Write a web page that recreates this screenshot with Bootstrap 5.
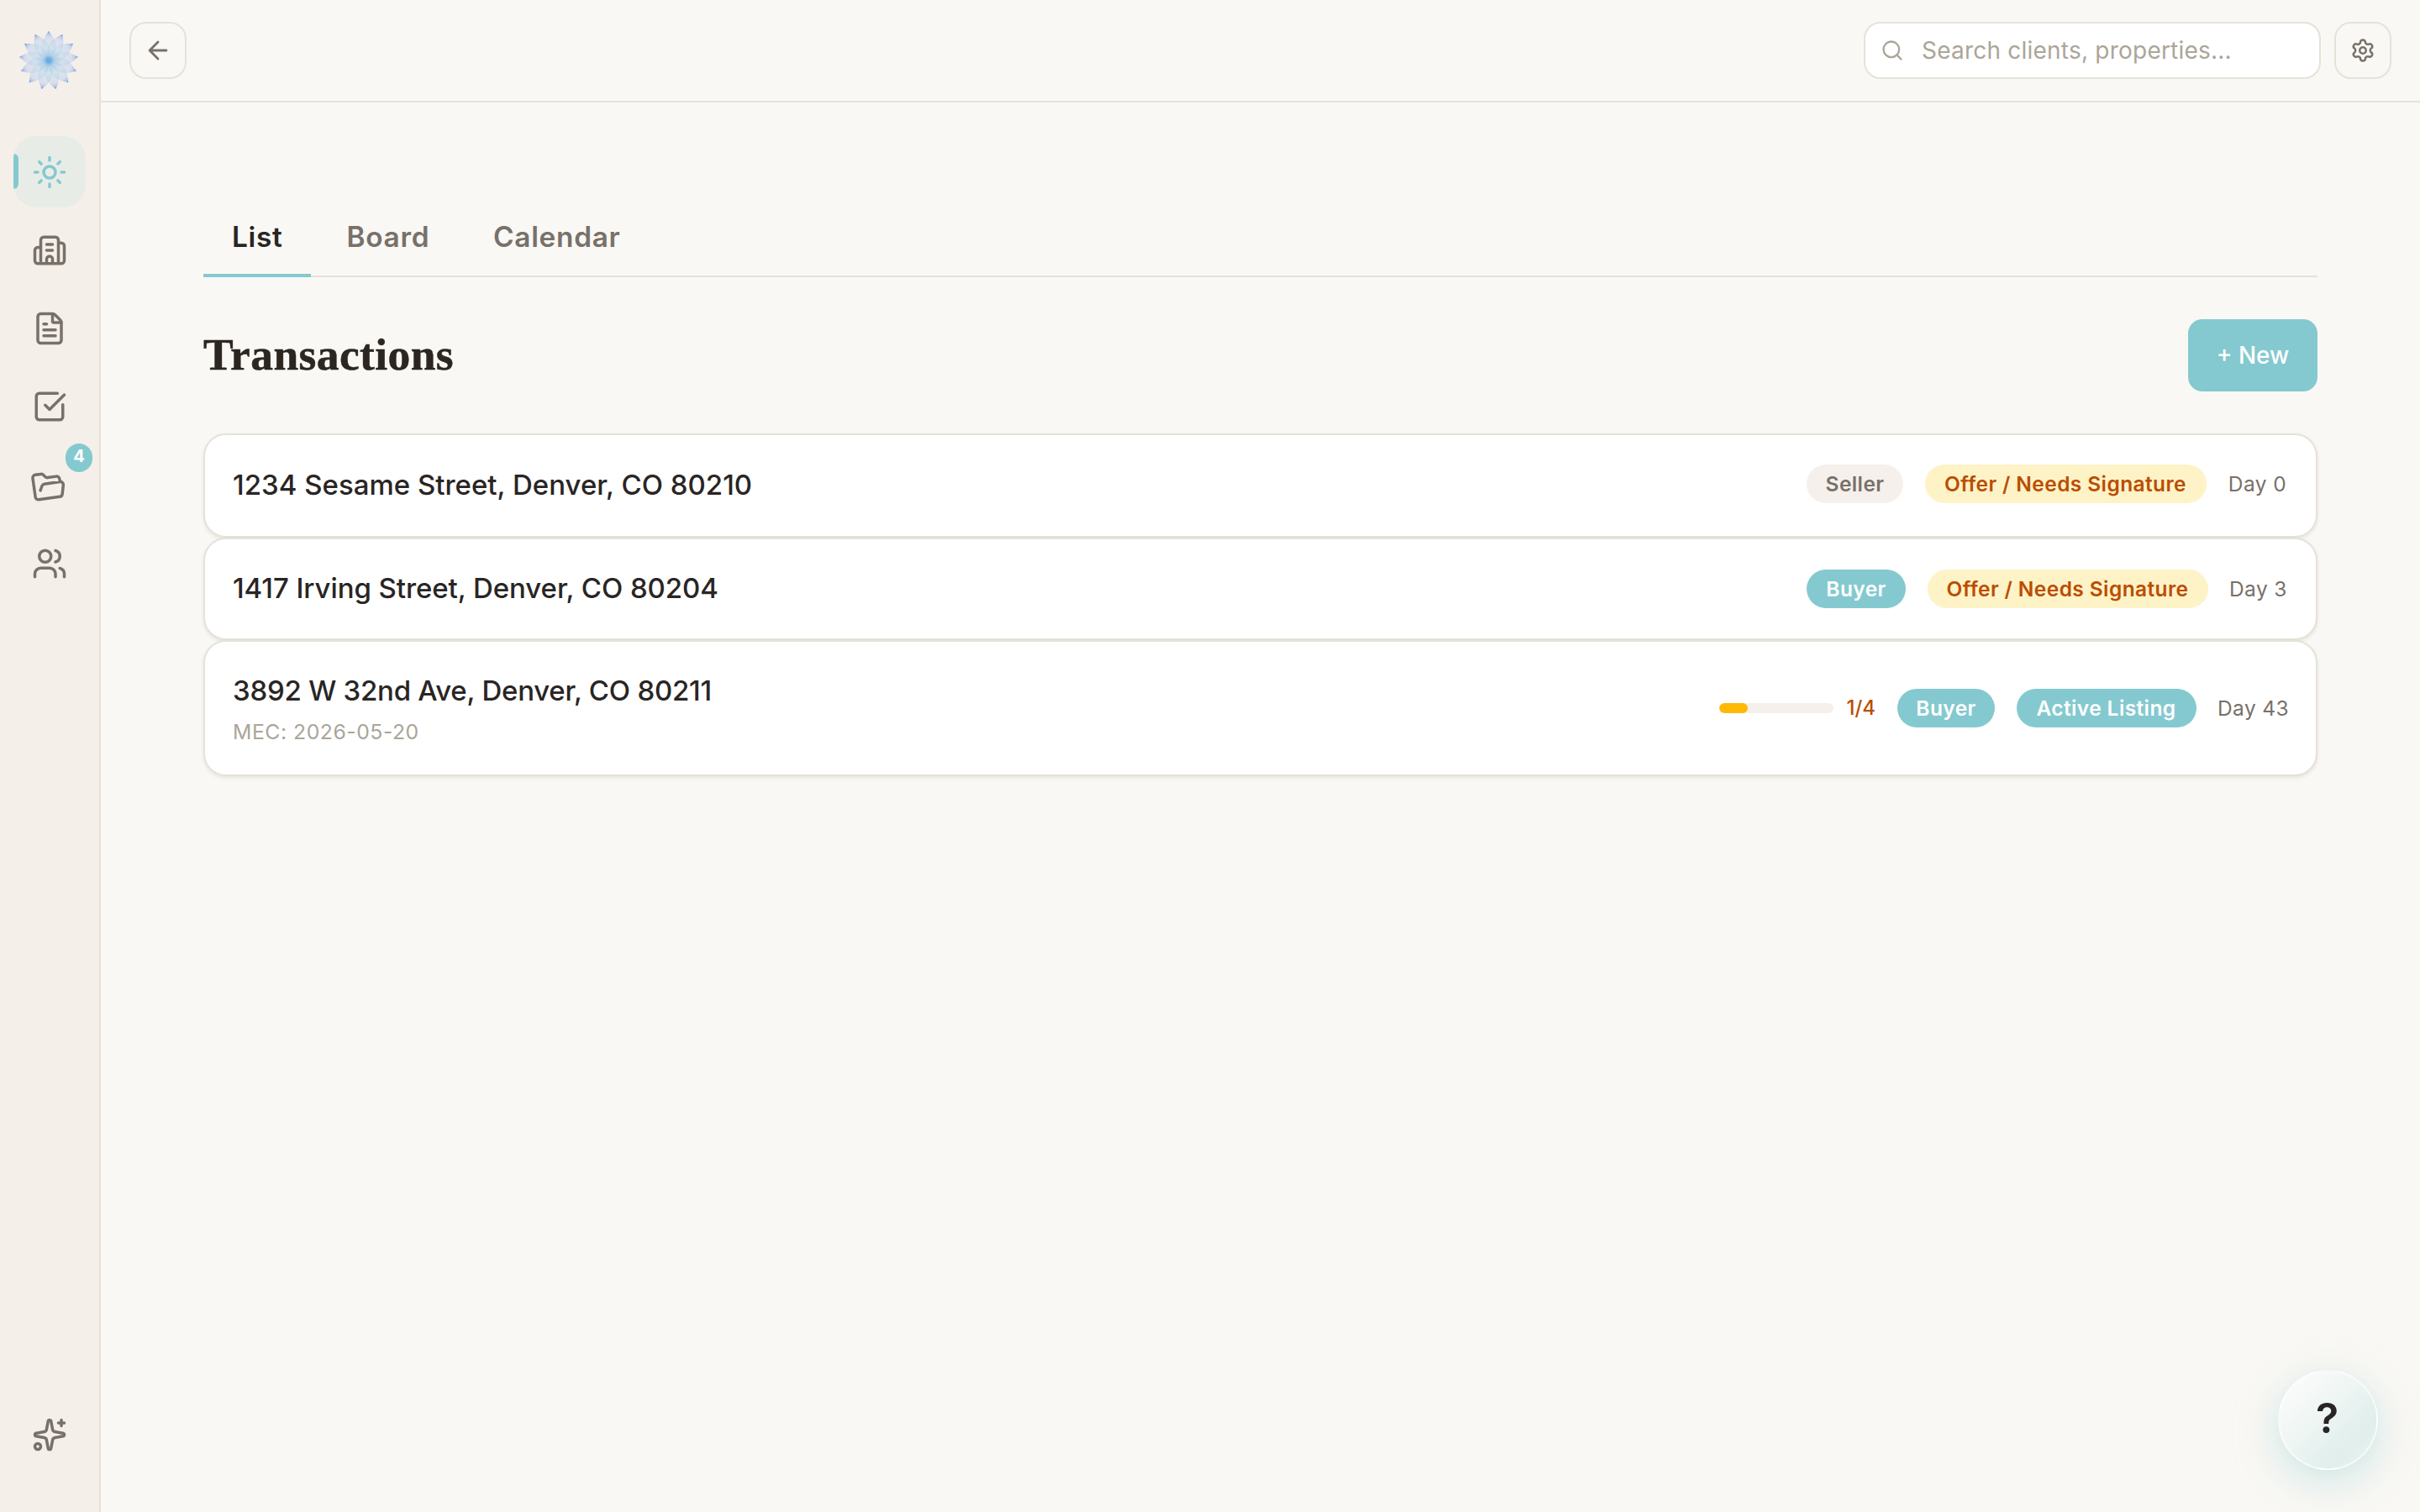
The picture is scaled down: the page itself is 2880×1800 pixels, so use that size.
<!DOCTYPE html>
<html lang="en">
<head>
<meta charset="utf-8">
<meta name="viewport" content="width=device-width, initial-scale=1">
<title>Transactions</title>
<link href="https://cdn.jsdelivr.net/npm/bootstrap@5.3.0/dist/css/bootstrap.min.css" rel="stylesheet">
<style>
:root{--teal:#84c9d0;--line:#e5e2d9;--ink:#292524;--muted-ink:#78716a;--faint:#aba599}
body{font-family:Inter,"Open Sans",sans-serif;background:#faf8f4;color:var(--ink);font-size:34px;line-height:1.5;overflow:hidden}
svg{display:block}
.ico{width:42px;height:42px;fill:none;stroke:currentColor;stroke-width:2;stroke-linecap:round;stroke-linejoin:round}
.rail{width:120px;background:#f5efe9;border-right:2px solid var(--line);padding:34px 16px 50px}
.logo{width:84px;height:76px;margin-bottom:52px}
.rail-nav{gap:8.3px}
.rail-item{width:85.5px;height:85px;border-radius:27px;color:var(--muted-ink);padding:0;border:0}
.rail-item.active{background:#e8ece6;color:var(--teal);overflow:hidden}
.rail-item.active::before{content:"";position:absolute;left:0;top:21px;width:6px;height:42px;background:var(--teal);border-radius:0 6px 6px 0}
.tilt{transform:translate(-1px,1px) rotate(-8deg)}
.count{position:absolute;left:62px;top:-7px;width:32px;height:34px;border-radius:17px;background:var(--teal);color:#fff;font-size:20px;font-weight:700;line-height:31px;text-align:center}
.topbar{height:122px;border-bottom:2px solid var(--line);padding:0 34px}
.sq{width:68px;height:68px;border:2px solid var(--line);border-radius:20px;color:var(--muted-ink);padding:0}
.search{width:544px;height:68px;border:2px solid var(--line);border-radius:20px;background:#fff;color:var(--faint);padding:0 18px;font-size:28px;gap:21px;letter-spacing:.22px}
.content-area{padding:117px 122px 0}
.tabs{border-bottom:2px solid var(--line);gap:8.5px}
.tab{height:91px;padding:18px 33px 18px 34px;margin-bottom:-2px;font-size:33.4px;font-weight:600;line-height:51px;letter-spacing:.7px;color:var(--muted-ink);border:0;border-bottom:4px solid transparent;border-radius:0;text-align:left;white-space:nowrap}
.tab.active{color:var(--ink);border-bottom-color:var(--teal)}
.head{height:86px;margin:50px 0}
.title{font-family:"Liberation Serif",serif;font-weight:700;font-size:53.500px;line-height:84px;padding-bottom:2px;letter-spacing:.4px;color:#2c2621;-webkit-text-stroke:.5px #2c2621}
.btn-new{width:154px;height:86px;border-radius:17px;background:var(--teal);color:#fff;font-size:28px;font-weight:500;padding:0}
.deal{background:#fff;border:2px solid var(--line);border-radius:27px;padding:0 34px 0 33px;box-shadow:0 2px 4px rgba(60,50,30,.1)}
.addr{font-size:33px;font-weight:500;line-height:50px;padding-bottom:2px;white-space:nowrap}
.a2{letter-spacing:-.08px}
.a3{letter-spacing:-.25px}
.mec{font-size:24.8px;line-height:38px;letter-spacing:.5px;padding-top:3px;color:var(--faint)}
.right{gap:25.5px;font-size:24.5px;white-space:nowrap}
.pill{height:46px;line-height:46px;border-radius:23px;text-align:center;font-size:24.5px;font-weight:600;letter-spacing:.4px}
.p-teal{background:var(--teal);color:#fff}
.p-sand{background:#f5f0eb;color:var(--muted-ink)}
.p-gold{background:#fef3c7;color:#bb4d00}
.day{color:var(--muted-ink);text-align:right;letter-spacing:.4px;margin-right:1px}
.meter{width:136px;height:12px;border-radius:6px;background:#f5f0eb;overflow:hidden}
.meter-fill{height:12px;border-radius:6px;background:#ffb900}
.done-count{color:#bb4d00;font-weight:500;font-size:24px;width:35px}
.help{position:fixed;right:50.500px;bottom:50px;width:119px;height:119px;border-radius:50%;border:2px solid rgba(255,255,255,.6);background:linear-gradient(135deg,#fbfcfa 8%,#eef5f3 45%,#e0eeec 75%,#ebf4f2 100%);box-shadow:0 14px 54px rgba(131,201,208,.36),0 4px 14px rgba(131,201,208,.08);font-size:50px;font-weight:600;color:#292524;padding:0 1px 5px 0}
</style>
</head>
<body>
<div class="d-flex vh-100">
  <aside class="rail d-flex flex-column flex-shrink-0">
    <div class="logo">
      <svg width="84" height="76" viewBox="-42 -38 84 76">
        <defs>
          <radialGradient id="pg" gradientUnits="userSpaceOnUse" cx="0" cy="0" r="35">
            <stop offset="0" stop-color="#2f8fe0" stop-opacity=".5"/>
            <stop offset=".2" stop-color="#6fb0ea" stop-opacity=".2"/>
            <stop offset=".45" stop-color="#a9d0ee" stop-opacity=".26"/>
            <stop offset=".8" stop-color="#bccbf0" stop-opacity=".5"/>
            <stop offset=".92" stop-color="#8fb0ea" stop-opacity=".7"/>
            <stop offset="1" stop-color="#3674d8" stop-opacity=".95"/>
          </radialGradient>
          <path id="petal" d="M0 0C-5 -5 -8.500 -12 -8 -18C-7.500 -24 -3.500 -30 0 -35C3.500 -30 7.500 -24 8 -18C8.500 -12 5 -5 0 0Z" fill="url(#pg)" stroke="#8fc4dc" stroke-opacity=".25" stroke-width=".6"/>
        </defs>
        <use href="#petal"/><use href="#petal" transform="rotate(27.69)"/><use href="#petal" transform="rotate(55.38)"/><use href="#petal" transform="rotate(83.08)"/><use href="#petal" transform="rotate(110.77)"/><use href="#petal" transform="rotate(138.46)"/><use href="#petal" transform="rotate(166.15)"/><use href="#petal" transform="rotate(193.85)"/><use href="#petal" transform="rotate(221.54)"/><use href="#petal" transform="rotate(249.23)"/><use href="#petal" transform="rotate(276.92)"/><use href="#petal" transform="rotate(304.62)"/><use href="#petal" transform="rotate(332.31)"/>
      </svg>
    </div>
    <nav class="rail-nav d-flex flex-column">
      <a class="rail-item active position-relative d-flex align-items-center justify-content-center"><svg class="ico" viewBox="0 0 24 24"><circle cx="12" cy="12" r="4"/><path d="M12 2v2M12 20v2M4.930 4.930l1.410 1.410M17.660 17.660l1.410 1.410M2 12h2M20 12h2M6.340 17.660l-1.410 1.410M19.070 4.930l-1.410 1.410"/></svg></a>
      <a class="rail-item d-flex align-items-center justify-content-center"><svg class="ico" viewBox="0 0 24 24"><path d="M10 12h4M10 8h4M14 21v-3a2 2 0 0 0-4 0v3M6 10H4a2 2 0 0 0-2 2v7a2 2 0 0 0 2 2h16a2 2 0 0 0 2-2V9a2 2 0 0 0-2-2h-2M6 21V5a2 2 0 0 1 2-2h8a2 2 0 0 1 2 2v16"/></svg></a>
      <a class="rail-item d-flex align-items-center justify-content-center"><svg class="ico" viewBox="0 0 24 24"><path d="M6 22a2 2 0 0 1-2-2V4a2 2 0 0 1 2-2h8a2.400 2.400 0 0 1 1.704.706l3.588 3.588A2.400 2.400 0 0 1 20 8v12a2 2 0 0 1-2 2z"/><path d="M14 2v5a1 1 0 0 0 1 1h5M10 9H8M16 13H8M16 17H8"/></svg></a>
      <a class="rail-item d-flex align-items-center justify-content-center"><svg class="ico" viewBox="0 0 24 24"><path d="M21 10.656V19a2 2 0 0 1-2 2H5a2 2 0 0 1-2-2V5a2 2 0 0 1 2-2h12.344"/><path d="m9 11 3 3L22 4"/></svg></a>
      <a class="rail-item position-relative d-flex align-items-center justify-content-center"><svg class="ico tilt" viewBox="0 0 24 24"><path d="m6 14 1.500-2.900A2 2 0 0 1 9.240 10H20a2 2 0 0 1 1.940 2.500l-1.540 6a2 2 0 0 1-1.950 1.500H4a2 2 0 0 1-2-2V5a2 2 0 0 1 2-2h3.900a2 2 0 0 1 1.690.9l.81 1.200a2 2 0 0 0 1.670.9H18a2 2 0 0 1 2 2v2"/></svg><span class="count">4</span></a>
      <a class="rail-item d-flex align-items-center justify-content-center"><svg class="ico" viewBox="0 0 24 24"><path d="M16 21v-2a4 4 0 0 0-4-4H6a4 4 0 0 0-4 4v2M16 3.128a4 4 0 0 1 0 7.744M22 21v-2a4 4 0 0 0-3-3.870"/><circle cx="9" cy="7" r="4"/></svg></a>
    </nav>
    <a class="rail-item mt-auto d-flex align-items-center justify-content-center"><svg class="ico" viewBox="0 0 24 24"><path d="M11.017 2.814a1 1 0 0 1 1.966 0l1.051 5.558a2 2 0 0 0 1.594 1.594l5.558 1.051a1 1 0 0 1 0 1.966l-5.558 1.051a2 2 0 0 0-1.594 1.594l-1.051 5.558a1 1 0 0 1-1.966 0l-1.051-5.558a2 2 0 0 0-1.594-1.594l-5.558-1.051a1 1 0 0 1 0-1.966l5.558-1.051a2 2 0 0 0 1.594-1.594zM20 2v4M22 4h-4"/><circle cx="4" cy="20" r="2"/></svg></a>
  </aside>

  <div class="flex-grow-1">
    <header class="topbar d-flex align-items-center justify-content-between">
      <button class="btn sq d-flex align-items-center justify-content-center"><svg class="ico" style="width:34px;height:34px" viewBox="0 0 24 24"><path d="m12 19-7-7 7-7M19 12H5"/></svg></button>
      <div class="d-flex gap-3">
        <div class="search d-flex align-items-center"><svg class="ico" style="width:28px;height:28px" viewBox="0 0 24 24"><circle cx="11" cy="11" r="8"/><path d="m21 21-4.340-4.340"/></svg><span>Search clients, properties...</span></div>
        <button class="btn sq d-flex align-items-center justify-content-center"><svg class="ico" style="width:30px;height:30px" viewBox="0 0 24 24"><path d="M9.671 4.136a2.340 2.340 0 0 1 4.659 0 2.340 2.340 0 0 0 3.319 1.915 2.340 2.340 0 0 1 2.330 4.033 2.340 2.340 0 0 0 0 3.831 2.340 2.340 0 0 1-2.330 4.033 2.340 2.340 0 0 0-3.319 1.915 2.340 2.340 0 0 1-4.659 0 2.340 2.340 0 0 0-3.320-1.915 2.340 2.340 0 0 1-2.330-4.033 2.340 2.340 0 0 0 0-3.831A2.340 2.340 0 0 1 6.350 6.051a2.340 2.340 0 0 0 3.319-1.915"/><circle cx="12" cy="12" r="3"/></svg></button>
      </div>
    </header>

    <main class="content-area">
      <div class="tabs d-flex">
        <button class="btn tab active" style="width:128px">List</button>
        <button class="btn tab" style="width:166px">Board</button>
        <button class="btn tab">Calendar</button>
      </div>
      <div class="head d-flex align-items-center justify-content-between">
        <h1 class="title m-0">Transactions</h1>
        <button class="btn btn-new">+ New</button>
      </div>
      <div class="d-flex flex-column">
        <div class="deal d-flex align-items-center justify-content-between" style="height:124px">
          <div class="addr">1234 Sesame Street, Denver, CO 80210</div>
          <div class="right d-flex align-items-center pb-1">
            <span class="pill p-sand" style="width:115px">Seller</span>
            <span class="pill p-gold" style="width:335px">Offer / Needs Signature</span>
            <span class="day" style="width:70px">Day 0</span>
          </div>
        </div>
        <div class="deal d-flex align-items-center justify-content-between" style="height:122px">
          <div class="addr a2">1417 Irving Street, Denver, CO 80204</div>
          <div class="right d-flex align-items-center">
            <span class="pill p-teal" style="width:118px">Buyer</span>
            <span class="pill p-gold" style="width:334px">Offer / Needs Signature</span>
            <span class="day" style="width:68px">Day 3</span>
          </div>
        </div>
        <div class="deal d-flex align-items-center justify-content-between" style="height:162px">
          <div>
            <div class="addr a3">3892 W 32nd Ave, Denver, CO 80211</div>
            <div class="mec">MEC: 2026-05-20</div>
          </div>
          <div class="right d-flex align-items-center">
            <div class="d-flex align-items-center gap-3"><div class="meter"><div class="meter-fill" style="width:25%"></div></div><span class="done-count">1/4</span></div>
            <span class="pill p-teal" style="width:116px">Buyer</span>
            <span class="pill p-teal" style="width:214px">Active Listing</span>
            <span class="day" style="width:82px">Day 43</span>
          </div>
        </div>
      </div>
    </main>
  </div>
</div>
<button class="btn help">?</button>
<script src="https://cdn.jsdelivr.net/npm/bootstrap@5.3.0/dist/js/bootstrap.bundle.min.js"></script>
</body>
</html>
